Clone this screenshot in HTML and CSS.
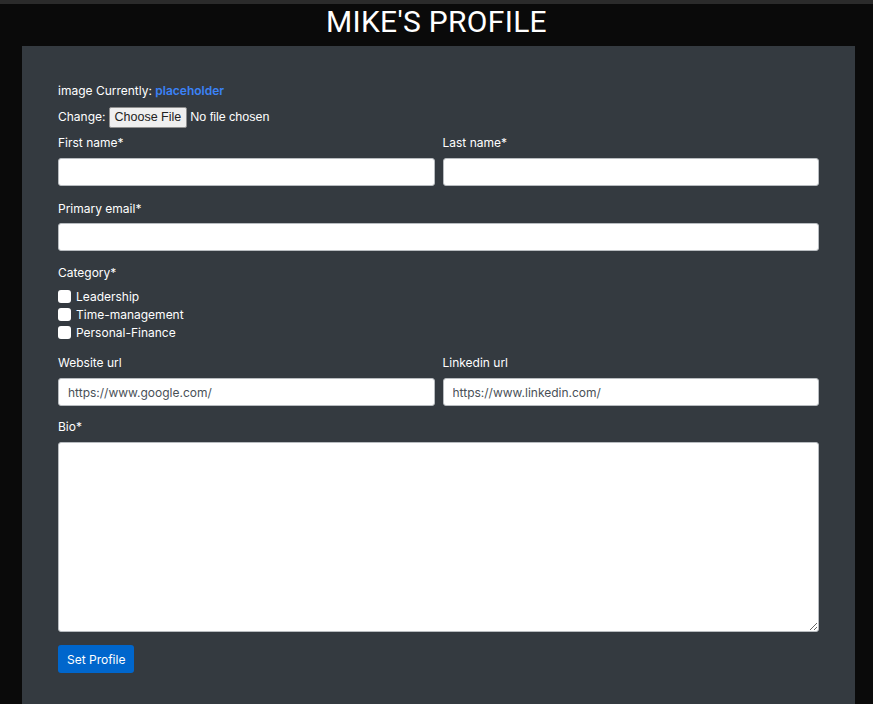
FILE: index.html
```html
<!DOCTYPE html>
<html>
<head>
<meta charset="utf-8">
<link rel="stylesheet" href="styles.css">
</head>
<body>
<div class="topbar"></div>
<h1 class="title">MIKE'S PROFILE</h1>
<main class="card">
  <form class="form">
    <p class="line">image Currently: <a class="link" href="#">placeholder</a></p>
    <div class="line change">Change: <span class="filebtn">Choose File</span> <span class="nofile">No file chosen</span></div>
    <div class="row two">
      <div class="field">
        <label class="lbl">First name*</label>
        <input class="inp" type="text">
      </div>
      <div class="field">
        <label class="lbl">Last name*</label>
        <input class="inp" type="text">
      </div>
    </div>
    <div class="row field email">
      <label class="lbl">Primary email*</label>
      <input class="inp" type="text">
    </div>
    <div class="row category">
      <label class="lbl">Category*</label>
      <div class="checks">
        <label class="check"><span class="box"></span>Leadership</label>
        <label class="check"><span class="box"></span>Time-management</label>
        <label class="check"><span class="box"></span>Personal-Finance</label>
      </div>
    </div>
    <div class="row two">
      <div class="field">
        <label class="lbl">Website url</label>
        <input class="inp" type="text" value="https://www.google.com/">
      </div>
      <div class="field">
        <label class="lbl">Linkedin url</label>
        <input class="inp" type="text" value="https://www.linkedin.com/">
      </div>
    </div>
    <div class="row field">
      <label class="lbl">Bio*</label>
      <textarea class="bio"></textarea>
    </div>
    <div class="actions">
      <button class="submit" type="button">Set Profile</button>
    </div>
  </form>
</main>
</body>
</html>
```
FILE: styles.css
```css
html, body {
  margin: 0;
  padding: 0;
  background: #0a0a0a;
  height: 100%;
  overflow: hidden;
}
body {
  font-family: "Inter", "DejaVu Sans", sans-serif;
  font-size: 12px;
  color: #ffffff;
}
.topbar {
  height: 4px;
  background: #2b2b2b;
}
.title {
  margin: 0;
  height: 42px;
  line-height: 36px;
  text-align: center;
  font-family: "Roboto", "Liberation Sans", sans-serif;
  font-weight: 400;
  font-size: 30px;
  color: #ffffff;
  letter-spacing: 0.3px;
}
.card {
  box-sizing: border-box;
  margin: 0 18px 0 22px;
  background: #343a40;
  padding: 36px 36px 40px;
  height: 658px;
}
.form {
  display: flex;
  flex-direction: column;
}
.line {
  margin: 0;
  line-height: 18px;
}
.link {
  color: #3b82f6;
  text-decoration: none;
  font-weight: 600;
}
.change {
  margin-top: 6px;
  display: flex;
  align-items: center;
  gap: 3px;
  height: 22px;
}
.filebtn {
  display: inline-block;
  background: #efefef;
  color: #222;
  border: 1px solid #8f8f8f;
  border-radius: 2px;
  padding: 0 5px;
  height: 19px;
  line-height: 19px;
  font-family: "Liberation Sans", Arial, sans-serif;
  font-size: 12.5px;
}
.nofile {
  font-family: "Liberation Sans", Arial, sans-serif;
  font-size: 12.5px;
}
.row {
  margin-top: 12px;
}
.change + .row {
  margin-top: 6px;
}
.row.email {
  margin-top: 14px;
}
.row.email .lbl {
  margin-bottom: 5px;
}
.row.category {
  margin-top: 13px;
}
.row.category .lbl {
  margin-bottom: 5px;
}
.row.category .checks {
  padding-bottom: 1px;
}
.two {
  display: grid;
  grid-template-columns: 1fr 1fr;
  gap: 8px;
}
.field {
  display: flex;
  flex-direction: column;
}
.lbl {
  display: block;
  line-height: 18px;
  margin-bottom: 6px;
}
.inp {
  box-sizing: border-box;
  width: 100%;
  height: 28px;
  margin: 0;
  border: 1px solid #b8bcc0;
  border-radius: 3px;
  background: #fff;
  padding: 0 9px;
  font-family: "Inter", "DejaVu Sans", sans-serif;
  font-size: 12px;
  color: #495057;
}
.checks {
  display: flex;
  flex-direction: column;
}
.check {
  display: flex;
  align-items: center;
  height: 18px;
  gap: 5px;
}
.box {
  width: 13px;
  height: 13px;
  background: #fff;
  border-radius: 3px;
}
.bio {
  box-sizing: border-box;
  width: 100%;
  height: 190px;
  margin: 0;
  border: 1px solid #b8bcc0;
  border-radius: 3px;
  background: #fff;
  resize: vertical;
  display: block;
}
.actions {
  margin-top: 13px;
}
.submit {
  background: #0066cc;
  color: #fff;
  border: none;
  border-radius: 3px;
  height: 28px;
  padding: 0 9px;
  font-family: "Inter", "DejaVu Sans", sans-serif;
  font-size: 12px;
}
```
